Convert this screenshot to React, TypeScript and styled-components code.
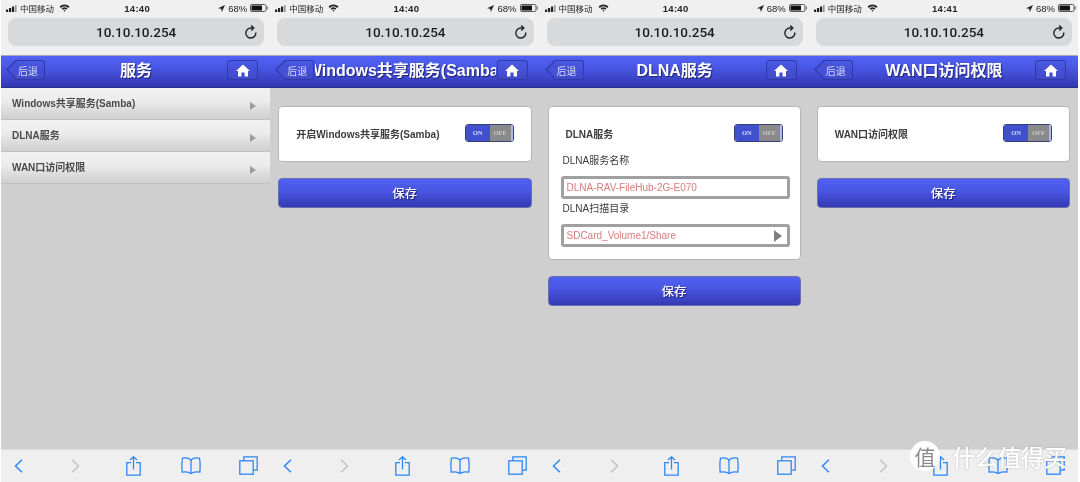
import React from "react";
import styled, { createGlobalStyle } from "styled-components";

const GlobalStyle = createGlobalStyle`
  html, body {
    margin: 0;
    padding: 0;
    background: #fff;
    font-family: "Liberation Sans", "Noto Sans CJK SC", sans-serif;
  }
`;

const Page = styled.div`
  position: relative;
  width: 1080px;
  height: 482px;
  padding: 0 2px 0 1px;
  box-sizing: border-box;
  display: grid;
  grid-template-columns: repeat(4, 1fr);
  overflow: hidden;
  filter: blur(0.45px);
`;

const Phone = styled.div`
  display: flex;
  flex-direction: column;
  min-width: 0;
  height: 482px;
  background: #cfcfcf;
`;

const Chrome = styled.div`
  height: 55px;
  flex: none;
  box-sizing: border-box;
  background: #f0f0f0;
  padding: 0 6px 0 7px;
`;

const StatusBar = styled.div`
  height: 18px;
  margin: 0 -4px 0 -3px;
  display: flex;
  align-items: center;
  font-size: 8.5px;
  color: #222;
  padding: 0 0 2px 1px;
  box-sizing: border-box;
`;

const Carrier = styled.div`
  display: flex;
  align-items: center;
  gap: 3px;
  flex: 1;
`;

const Clock = styled.div`
  font-weight: 700;
  font-size: 9.5px;
  letter-spacing: 0.3px;
`;

const Battery = styled.div`
  flex: 1;
  display: flex;
  align-items: center;
  justify-content: flex-end;
  gap: 3px;
  font-size: 9.5px;
`;

const AddressBar = styled.div`
  height: 28px;
  border-radius: 8px;
  background: #d8d9db;
  display: flex;
  align-items: center;
  justify-content: center;
  position: relative;
  font-family: Roboto, "Liberation Sans", sans-serif;
  font-size: 13.5px;
  font-weight: 500;
  color: #1c1c1c;
`;

const Reload = styled.svg`
  position: absolute;
  right: 6px;
  top: 7px;
`;

const Header = styled.div`
  height: 33px;
  flex: none;
  box-sizing: border-box;
  display: flex;
  align-items: center;
  padding: 0 12px 3px 14px;
  background: linear-gradient(#5262f4, #4a58e6 35%, #3338b2);
  border-top: 1px solid #a9a9b8;
  border-bottom: 1px solid #2a2d86;
`;

const BackButton = styled.div`
  position: relative;
  flex: none;
  width: 30px;
  height: 20px;
  box-sizing: border-box;
  display: flex;
  align-items: center;
  justify-content: flex-end;
  padding-right: 6px;
  font-size: 10px;
  color: #d4d8f6;
  background: linear-gradient(#4a58e2, #3f49c8);
  border: 1px solid #3138a8;
  border-left: none;
  border-radius: 0 3px 3px 0;

  &::before {
    content: "";
    position: absolute;
    left: -6px;
    top: 2px;
    width: 13px;
    height: 13px;
    box-sizing: border-box;
    background: #4651d6;
    border-left: 1px solid #3138a8;
    border-bottom: 1px solid #3138a8;
    transform: rotate(45deg);
  }

  span {
    position: relative;
  }
`;

const Title = styled.div`
  flex: 1;
  min-width: 0;
  margin: -2px 1px 0;
  display: flex;
  justify-content: center;
  overflow: hidden;
  white-space: nowrap;
  font-size: 16px;
  font-weight: 700;
  color: #fff;
  text-shadow: 1px 1px 1px rgba(10, 10, 60, 0.6);
`;

const HomeButton = styled.div`
  flex: none;
  width: 31px;
  height: 20px;
  box-sizing: border-box;
  display: flex;
  align-items: center;
  justify-content: center;
  background: linear-gradient(#4a58e2, #3f49c8);
  border: 1px solid #3138a8;
  border-radius: 3px;
`;

const Body = styled.div`
  flex: 1;
  min-height: 0;
  box-sizing: border-box;
  padding: ${(p: { $list?: boolean }) => (p.$list ? "0" : "18px 8px 0")};
`;

const Row = styled.div`
  height: 32px;
  box-sizing: border-box;
  display: flex;
  align-items: center;
  justify-content: space-between;
  padding: 0 14px 3px 11px;
  font-size: 10px;
  font-weight: 700;
  color: #4a4a4a;
  background: linear-gradient(#f1f1f1, #ececec 40%, #cfcfcf);
  border-bottom: 1px solid #c2c2c2;
`;

const RowArrow = styled.div`
  margin-top: 7px;
  width: 0;
  height: 0;
  border-left: 6px solid #9c9c9c;
  border-top: 4.5px solid transparent;
  border-bottom: 4.5px solid transparent;
`;

const Card = styled.div`
  background: #fff;
  border: 1px solid #b5b5b5;
  border-radius: 4px;
  box-sizing: border-box;
  padding: 17px 17px 0;
  height: ${(p: { $tall?: boolean }) => (p.$tall ? "154px" : "56px")};
`;

const SwitchRow = styled.div`
  height: 18px;
  display: flex;
  align-items: center;
  justify-content: space-between;
  font-size: 10px;
  font-weight: 700;
  color: #3c3c3c;
`;

const Toggle = styled.div`
  width: 49px;
  height: 18px;
  flex: none;
  box-sizing: border-box;
  display: flex;
  border: 1px solid #3a4077;
  border-radius: 3px;
  overflow: hidden;
  font-family: "Liberation Serif", serif;
  font-size: 6.5px;
  font-weight: 700;
  line-height: 16px;
  text-align: center;
`;

const ToggleOn = styled.div`
  width: 24px;
  background: #4150cc;
  color: #d8dcff;
`;

const ToggleOff = styled.div`
  flex: 1;
  background: #8a8a8a;
  color: #c9c9c9;
  border-right: 2px solid #a9c0ec;
`;

const FieldLabel = styled.div`
  margin: ${(p: { $first?: boolean }) => (p.$first ? "9px" : "0")} 0 0 -3px;
  height: 20px;
  line-height: 20px;
  font-size: 10px;
  color: #3c3c3c;
`;

const Field = styled.div`
  margin: 5px -7px 0 -5px;
  height: 23px;
  box-sizing: border-box;
  display: flex;
  align-items: center;
  justify-content: space-between;
  padding: 0 5px 0 3px;
  background: #fff;
  border: 3px solid #a0a0a0;
  border-radius: 3px;
  font-size: 10px;
  color: #d87c7c;
`;

const FieldArrow = styled.div`
  width: 0;
  height: 0;
  border-left: 8px solid #808080;
  border-top: 6.5px solid transparent;
  border-bottom: 6.5px solid transparent;
`;

const SaveButton = styled.div`
  margin-top: 16px;
  height: 30px;
  display: flex;
  align-items: center;
  justify-content: center;
  box-sizing: border-box;
  padding-bottom: 2px;
  border-radius: 4px;
  border: 1px solid #6a6fb0;
  background: linear-gradient(#5060f2, #4a57e4 40%, #3439b4);
  color: #fff;
  font-size: 12.5px;
  font-weight: 500;
  text-shadow: 1px 1px 1px rgba(10, 10, 60, 0.6);
`;

const Toolbar = styled.div`
  height: 33px;
  flex: none;
  box-sizing: border-box;
  background: #efefef;
  border-top: 1px solid #dcdcdc;
  display: grid;
  grid-template-columns: repeat(5, 57.5px);
  justify-content: center;
  justify-items: center;
  align-items: center;
  padding: 0 5px 1px 0;
`;

const Watermark = styled.div`
  position: absolute;
  left: 910px;
  top: 439px;
  display: flex;
  align-items: center;
  gap: 12px;
`;

const WatermarkCircle = styled.div`
  width: 30px;
  height: 30px;
  border-radius: 50%;
  background: #fff;
  display: flex;
  align-items: center;
  justify-content: center;
  color: #8a8a8a;
  font-size: 21px;
  font-family: "Noto Sans CJK SC", sans-serif;
`;

const WatermarkText = styled.div`
  font-size: 23px;
  font-weight: 500;
  color: #fff;
  font-family: "Noto Sans CJK SC", sans-serif;
  text-shadow: 0 0 2px rgba(120, 120, 120, 0.5);
  white-space: nowrap;
`;

const SignalIcon = () => (
  <svg width="11" height="7" viewBox="0 0 11 7">
    <rect x="0" y="4.5" width="2.2" height="2.5" fill="#222" />
    <rect x="3" y="3" width="2.2" height="4" fill="#222" />
    <rect x="6" y="1.5" width="2.2" height="5.5" fill="#222" />
    <rect x="9" y="0" width="1.6" height="7" fill="#999" />
  </svg>
);

const WifiIcon = () => (
  <svg width="11" height="8" viewBox="0 0 11 8" style={{ marginLeft: 2 }}>
    <path d="M0.5 2.6 A7 7 0 0 1 10.5 2.6 L9.2 3.9 A5.2 5.2 0 0 0 1.8 3.9 Z" fill="#222" />
    <path d="M2.6 4.6 A4.2 4.2 0 0 1 8.4 4.6 L7.2 5.8 A2.5 2.5 0 0 0 3.8 5.8 Z" fill="#222" />
    <path d="M4.5 6.5 A1.5 1.5 0 0 1 6.5 6.5 L5.5 7.7 Z" fill="#222" />
  </svg>
);

const LocationIcon = () => (
  <svg width="7" height="7" viewBox="0 0 7 7">
    <path d="M7 0 L0 3.2 L3.2 3.8 L3.8 7 Z" fill="#222" />
  </svg>
);

const BatteryIcon = () => (
  <svg width="18" height="8" viewBox="0 0 18 8">
    <rect x="0.5" y="0.5" width="15.5" height="7" rx="1.5" fill="none" stroke="#555" />
    <rect x="1.5" y="1.5" width="10.5" height="5" rx="0.5" fill="#111" />
    <rect x="16.7" y="2.5" width="1.2" height="3" fill="#777" />
  </svg>
);

const ReloadIcon = () => (
  <Reload width="14" height="15" viewBox="0 0 14 15" fill="none" stroke="#222" strokeWidth="1.4">
    <path d="M11.8 7.5 A5 5 0 1 1 7 3 L9 3" />
    <path d="M7.2 0.6 L9.8 3 L7.2 5.4" />
  </Reload>
);

const HomeIcon = () => (
  <svg width="14" height="13" viewBox="0 0 14 13" fill="#fff">
    <path d="M7 0.5 L14 7 L12 7 L12 12.5 L8.6 12.5 L8.6 8.4 L5.4 8.4 L5.4 12.5 L2 12.5 L2 7 L0 7 Z" />
  </svg>
);

const BackIcon = () => (
  <svg width="9" height="14" viewBox="0 0 9 14" fill="none" stroke="#2f86f6" strokeWidth="1.5">
    <path d="M8 0.8 L1.5 7 L8 13.2" />
  </svg>
);

const ForwardIcon = () => (
  <svg width="9" height="14" viewBox="0 0 9 14" fill="none" stroke="#c4c4c4" strokeWidth="1.5">
    <path d="M1 0.8 L7.5 7 L1 13.2" />
  </svg>
);

const ShareIcon = () => (
  <svg width="15" height="20" viewBox="0 0 15 20" fill="none" stroke="#2f86f6" strokeWidth="1.3">
    <path d="M5 6.7 L0.8 6.7 L0.8 19.2 L14.2 19.2 L14.2 6.7 L10 6.7" />
    <path d="M7.5 13.5 L7.5 1 M4 4 L7.5 0.8 L11 4" />
  </svg>
);

const BookIcon = () => (
  <svg width="20" height="18" viewBox="0 0 20 18" fill="none" stroke="#2f86f6" strokeWidth="1.3">
    <path d="M10 3 C8 1 4 0.6 1.5 1.2 C0.8 5 0.8 11 1.2 15.2 C4 14.6 8 15 10 16.6 C12 15 16 14.6 18.8 15.2 C19.2 11 19.2 5 18.5 1.2 C16 0.6 12 1 10 3 Z" />
    <path d="M10 3 L10 17" />
  </svg>
);

const TabsIcon = () => (
  <svg width="19" height="19" viewBox="0 0 19 19" fill="none" stroke="#2f86f6" strokeWidth="1.3">
    <rect x="0.8" y="4.8" width="13.4" height="13.4" />
    <path d="M4.8 4.8 L4.8 0.8 L18.2 0.8 L18.2 14.2 L14.2 14.2" />
  </svg>
);

type ScreenProps = {
  time: string;
  title: string;
  children: React.ReactNode;
};

const Screen = ({ time, title, children }: ScreenProps) => (
  <Phone>
    <Chrome>
      <StatusBar>
        <Carrier>
          <SignalIcon />
          <span>中国移动</span>
          <WifiIcon />
        </Carrier>
        <Clock>{time}</Clock>
        <Battery>
          <LocationIcon />
          <span>68%</span>
          <BatteryIcon />
        </Battery>
      </StatusBar>
      <AddressBar>
        10.10.10.254
        <ReloadIcon />
      </AddressBar>
    </Chrome>
    <Header>
      <BackButton>
        <span>后退</span>
      </BackButton>
      <Title>{title}</Title>
      <HomeButton>
        <HomeIcon />
      </HomeButton>
    </Header>
    {children}
    <Toolbar>
      <BackIcon />
      <ForwardIcon />
      <ShareIcon />
      <BookIcon />
      <TabsIcon />
    </Toolbar>
  </Phone>
);

const services = ["Windows共享服务(Samba)", "DLNA服务", "WAN口访问权限"];

const App = () => (
  <Page>
    <GlobalStyle />
    <Screen time="14:40" title="服务">
      <Body $list>
        {services.map((name) => (
          <Row key={name}>
            {name}
            <RowArrow />
          </Row>
        ))}
      </Body>
    </Screen>
    <Screen time="14:40" title="Windows共享服务(Samba)">
      <Body>
        <Card>
          <SwitchRow>
            开启Windows共享服务(Samba)
            <Toggle>
              <ToggleOn>ON</ToggleOn>
              <ToggleOff>OFF</ToggleOff>
            </Toggle>
          </SwitchRow>
        </Card>
        <SaveButton>保存</SaveButton>
      </Body>
    </Screen>
    <Screen time="14:40" title="DLNA服务">
      <Body>
        <Card $tall>
          <SwitchRow>
            DLNA服务
            <Toggle>
              <ToggleOn>ON</ToggleOn>
              <ToggleOff>OFF</ToggleOff>
            </Toggle>
          </SwitchRow>
          <FieldLabel $first>DLNA服务名称</FieldLabel>
          <Field>DLNA-RAV-FileHub-2G-E070</Field>
          <FieldLabel>DLNA扫描目录</FieldLabel>
          <Field>
            SDCard_Volume1/Share
            <FieldArrow />
          </Field>
        </Card>
        <SaveButton>保存</SaveButton>
      </Body>
    </Screen>
    <Screen time="14:41" title="WAN口访问权限">
      <Body>
        <Card>
          <SwitchRow>
            WAN口访问权限
            <Toggle>
              <ToggleOn>ON</ToggleOn>
              <ToggleOff>OFF</ToggleOff>
            </Toggle>
          </SwitchRow>
        </Card>
        <SaveButton>保存</SaveButton>
      </Body>
    </Screen>
    <Watermark>
      <WatermarkCircle>值</WatermarkCircle>
      <WatermarkText>什么值得买</WatermarkText>
    </Watermark>
  </Page>
);

export default App;
